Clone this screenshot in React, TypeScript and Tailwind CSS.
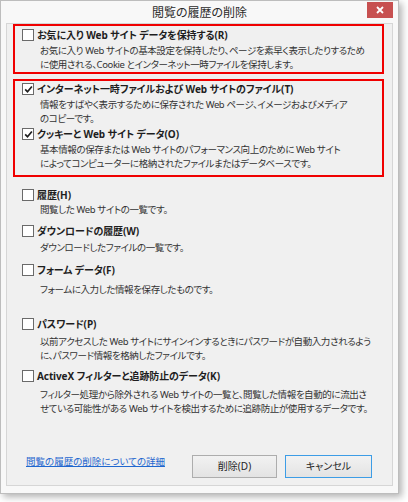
import React from "react";

function Box({ checked }: { checked?: boolean }) {
  return (
    <span className="flex h-[12px] w-[12px] shrink-0 items-center justify-center border border-[#6a6a6a] bg-white">
      {checked && (
        <svg width="9" height="9" viewBox="0 0 9 9">
          <path d="M1.2 4.4 L3.5 6.8 L7.9 1.5" fill="none" stroke="#1e1e1e" strokeWidth="1.7" />
        </svg>
      )}
    </span>
  );
}

type ItemProps = {
  label: string;
  lines: string[];
  checked?: boolean;
  className?: string;
  descClass: string;
};

function Item({ label, lines, checked, className, descClass }: ItemProps) {
  return (
    <div className={className}>
      <div className="flex h-[14px] items-center gap-[3px]">
        <Box checked={checked} />
        <span className="whitespace-nowrap text-[10px] font-bold leading-[14px] tracking-[-0.1px] text-[#1e1e1e]">{label}</span>
      </div>
      <div className={`pl-[18px] text-[9.5px] leading-[14px] tracking-[-0.4px] text-[#333333] ${descClass}`}>
        {lines.map((l) => (
          <div key={l} className="whitespace-nowrap">
            {l}
          </div>
        ))}
      </div>
    </div>
  );
}

export default function App() {
  return (
    <div className="h-[502px] w-[408px] bg-white font-['Noto_Sans','Noto_Sans_CJK_JP',sans-serif] [font-feature-settings:'palt']">
      <div className="flex h-[494px] w-[399px] flex-col border border-[#bdbdbd] bg-[#f8f8f8] px-[5px] pb-[7px] shadow-[3px_3px_7px_rgba(0,0,0,0.3)]">
        <div className="grid h-[22px] grid-cols-[1fr_auto_1fr] items-start">
          <div />
          <span className="mt-[2px] text-[12px] leading-[20px] text-[#2b2b2b]">閲覧の履歴の削除</span>
          <div className="flex justify-end">
            <button className="mt-[1px] flex h-[16px] w-[26px] items-center justify-center bg-[#c75050]">
              <svg width="8" height="8" viewBox="0 0 8 8">
                <path d="M1 1 L7 7 M7 1 L1 7" stroke="white" strokeWidth="1.8" />
              </svg>
            </button>
          </div>
        </div>

        <div className="flex flex-1 flex-col border border-[#d6d6d6] bg-[#f0f0f0]">
          <div className="ml-[6px] mr-[8px] border-2 border-[#f00000] pl-[7px] pt-[2px]">
            <Item
              label="お気に入り Web サイト データを保持する(R)"
              descClass="mt-[2px]"
              lines={[
                "お気に入り Web サイトの基本設定を保持したり、ページを素早く表示したりするため",
                "に使用される、Cookie とインターネット一時ファイルを保持します。",
              ]}
            />
          </div>

          <div className="ml-[6px] mr-[8px] mt-[5px] border-2 border-[#f00000] pb-[4px] pl-[7px] pt-[1px]">
            <Item
              checked
              label="インターネット一時ファイルおよび Web サイトのファイル(T)"
              descClass="mt-[2px]"
              lines={[
                "情報をすばやく表示するために保存された Web ページ、イメージおよびメディア",
                "のコピーです。",
              ]}
            />
            <Item
              checked
              className="mt-[1px]"
              label="クッキーと Web サイト データ(O)"
              descClass="mt-[2px]"
              lines={[
                "基本情報の保存または Web サイトのパフォーマンス向上のために Web サイト",
                "によってコンピューターに格納されたファイルまたはデータベースです。",
              ]}
            />
          </div>

          <div className="pl-[15px]">
            <Item
              className="mt-[11px]"
              label="履歴(H)"
              descClass="mt-[1px]"
              lines={["閲覧した Web サイトの一覧です。"]}
            />
            <Item
              className="mt-[7px]"
              label="ダウンロードの履歴(W)"
              descClass="mt-[3px]"
              lines={["ダウンロードしたファイルの一覧です。"]}
            />
            <Item
              className="mt-[8px]"
              label="フォーム データ(F)"
              descClass="mt-[6px]"
              lines={["フォームに入力した情報を保存したものです。"]}
            />
            <Item
              className="mt-[20px]"
              label="パスワード(P)"
              descClass="mt-[4px]"
              lines={[
                "以前アクセスした Web サイトにサインインするときにパスワードが自動入力されるよう",
                "に、パスワード情報を格納したファイルです。",
              ]}
            />
            <Item
              className="mt-[6px]"
              label="ActiveX フィルターと追跡防止のデータ(K)"
              descClass="mt-[5px]"
              lines={[
                "フィルター処理から除外される Web サイトの一覧と、閲覧した情報を自動的に流出さ",
                "せている可能性がある Web サイトを検出するために追跡防止が使用するデータです。",
              ]}
            />
          </div>

          <div className="flex-1" />

          <div className="flex items-start pb-[7px] pl-[19px] pr-[20px]">
            <a href="#" className="text-[9.5px] leading-[14px] text-[#1f67cf] underline">
              閲覧の履歴の削除についての詳細
            </a>
            <div className="flex-1" />
            <button className="h-[23px] w-[85px] border border-[#adadad] bg-gradient-to-b from-[#f2f2f2] to-[#e3e3e3] text-[10px] text-[#1e1e1e]">
              削除(D)
            </button>
            <button className="ml-[8px] h-[23px] w-[87px] border border-[#3d9de6] bg-gradient-to-b from-[#f2f2f2] to-[#e3e3e3] text-[10px] text-[#1e1e1e]">
              キャンセル
            </button>
          </div>
        </div>
      </div>
    </div>
  );
}
